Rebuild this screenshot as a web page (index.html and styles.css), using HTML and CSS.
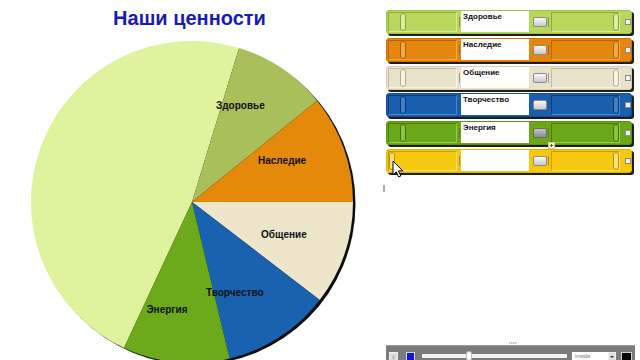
FILE: index.html
```html
<!DOCTYPE html>
<html lang="ru">
<head>
<meta charset="utf-8">
<title>Наши ценности</title>
<link rel="stylesheet" href="styles.css">
</head>
<body>
<div class="page">
  <section class="chart">
    <h1 class="title">Наши ценности</h1>
    <svg class="pie" width="384" height="324" viewBox="0 36 384 324" xmlns="http://www.w3.org/2000/svg">
      <defs>
        <filter id="sh" x="-10%" y="-10%" width="120%" height="120%">
          <feGaussianBlur stdDeviation="0.7"/>
        </filter>
      </defs>
      <circle cx="194.5" cy="204" r="161" fill="#111" filter="url(#sh)"/>
      <path d="M192 202 L124 347.9 A161 161 0 0 1 239.1 48 Z" fill="#dff29d"/>
      <path d="M192 202 L239.1 48 A161 161 0 0 1 317.1 100.7 Z" fill="#a9bf5a"/>
      <path d="M192 202 L317.1 100.7 A161 161 0 0 1 353 202 Z" fill="#e5890b"/>
      <path d="M192 202 L353 202 A161 161 0 0 1 319.7 300 Z" fill="#ede6cb"/>
      <path d="M192 202 L319.7 300 A161 161 0 0 1 229.6 358.6 Z" fill="#1862b0"/>
      <path d="M192 202 L229.6 358.6 A161 161 0 0 1 124 347.9 Z" fill="#6ca91b"/>
      <g class="labels">
        <text x="216" y="108.5">Здоровье</text>
        <text x="258" y="163.5">Наследие</text>
        <text x="261" y="237.5">Общение</text>
        <text x="206" y="295.5">Творчество</text>
        <text x="146.5" y="312.8">Энергия</text>
      </g>
    </svg>
  </section>

  <aside class="panel">
    <div class="rows">
      <div class="row row-lime">
        <div class="track"><span class="thumb" style="margin-left:11px"></span></div>
        <span class="tick"></span>
        <div class="field">Здоровье</div>
        <span class="btn"></span>
        <span class="tick"></span>
        <div class="track track-r"><span class="thumb" style="margin-left:61px"></span></div>
        <span class="check"></span>
      </div>
      <div class="row row-orange">
        <div class="track"><span class="thumb" style="margin-left:11px"></span></div>
        <span class="tick"></span>
        <div class="field">Наследие</div>
        <span class="btn"></span>
        <span class="tick"></span>
        <div class="track track-r"><span class="thumb" style="margin-left:61px"></span></div>
        <span class="check"></span>
      </div>
      <div class="row row-cream">
        <div class="track"><span class="thumb" style="margin-left:11px"></span></div>
        <span class="tick"></span>
        <div class="field">Общение</div>
        <span class="btn"></span>
        <span class="tick"></span>
        <div class="track track-r"><span class="thumb" style="margin-left:61px"></span></div>
        <span class="check"></span>
      </div>
      <div class="row row-blue">
        <div class="track"><span class="thumb" style="margin-left:11px"></span></div>
        <span class="tick"></span>
        <div class="field">Творчество</div>
        <span class="btn"></span>
        <span class="tick"></span>
        <div class="track track-r"><span class="thumb" style="margin-left:61px"></span></div>
        <span class="check"></span>
      </div>
      <div class="row row-green">
        <div class="track"><span class="thumb" style="margin-left:11px"></span></div>
        <span class="tick"></span>
        <div class="field">Энергия</div>
        <span class="btn btn-active"></span>
        <span class="tick"></span>
        <div class="track track-r"><span class="thumb" style="margin-left:61px"></span></div>
        <span class="check"></span>
      </div>
      <div class="row row-yellow">
        <div class="track"><span class="thumb" style="margin-left:0px"></span></div>
        <span class="tick"></span>
        <div class="field"></div>
        <span class="btn"></span>
        <span class="tick"></span>
        <div class="track track-r"><span class="thumb" style="margin-left:61px"></span></div>
        <span class="check"></span>
      </div>
    </div>
    <span class="mark"></span>
    <div class="spacer"></div>
    <span class="grip"></span>
    <div class="toolbar">
      <span class="tb-btn">i</span>
      <span class="tb-color"></span>
      <div class="tb-slider"><span class="tb-thumb"></span></div>
      <span class="tb-select">inside</span>
      <span class="tb-arrow"></span>
      <span class="tb-black"></span>
    </div>
  </aside>

  <span class="tip"></span>
  <svg class="cursor" width="12" height="19" viewBox="0 0 12 19" xmlns="http://www.w3.org/2000/svg">
    <path d="M1 1 L1 15 L4.3 11.8 L6.6 17 L8.8 16 L6.5 10.9 L10.8 10.9 Z" fill="#fff" stroke="#000" stroke-width="1" stroke-linejoin="round"/>
  </svg>
</div>
</body>
</html>
```

FILE: styles.css
```css
html, body {
  margin: 0;
  padding: 0;
}

body {
  width: 640px;
  height: 360px;
  overflow: hidden;
  background: #ffffff;
  font-family: "Liberation Sans", Arial, sans-serif;
}

.page {
  position: relative;
  display: flex;
  width: 640px;
  height: 360px;
}

/* ---------- chart ---------- */
.chart {
  width: 384px;
  flex: none;
  display: flex;
  flex-direction: column;
}

.title {
  margin: 0;
  height: 36px;
  box-sizing: border-box;
  padding: 6px 5px 0 0;
  font-size: 20px;
  line-height: 24px;
  font-weight: bold;
  color: #1a1ab6;
  text-align: center;
}

.pie {
  display: block;
}

.labels text {
  font-family: "Liberation Sans", Arial, sans-serif;
  font-size: 10px;
  font-weight: bold;
  fill: #111;
}

/* ---------- panel ---------- */
.panel {
  width: 256px;
  flex: none;
  display: flex;
  flex-direction: column;
  box-sizing: border-box;
  padding: 10px 0 0 2px;
}

.rows {
  display: flex;
  flex-direction: column;
  gap: 3.8px;
}

.row {
  width: 246px;
  height: 24px;
  box-sizing: border-box;
  display: flex;
  align-items: center;
  background: var(--bg);
  border: 1px solid var(--bd);
  border-radius: 3px;
  box-shadow: 2px 2px 0 #1e1e1e;
}

.row-lime   { --bg: #b9d75c; --bd: #a3c046; --lo: #8fa93c; --hi: #d6ea98; --tk: #dcefa0; --tkb: #86a236; }
.row-orange { --bg: #e5860d; --bd: #cd7200; --lo: #b86200; --hi: #f3ac55; --tk: #f4a747; --tkb: #b15e00; }
.row-cream  { --bg: #e9e3cc; --bd: #d6cfb3; --lo: #c4bc9c; --hi: #f7f3e6; --tk: #f7f4e6; --tkb: #b5ad8c; }
.row-blue   { --bg: #1a5eae; --bd: #104c94; --lo: #0c3d7a; --hi: #4a86cc; --tk: #3f80c8; --tkb: #0b3670; }
.row-green  { --bg: #6ba819; --bd: #5a940b; --lo: #4a7f04; --hi: #94c94e; --tk: #8cc441; --tkb: #3e7200; }
.row-yellow { --bg: #f6c80f; --bd: #e2b300; --lo: #c89d00; --hi: #fde27a; --tk: #fbe277; --tkb: #bb9000; }

.track {
  width: 69px;
  height: 20px;
  box-sizing: border-box;
  margin-left: 1px;
  display: flex;
  align-items: center;
  border: 1px solid;
  border-color: var(--lo) var(--hi) var(--hi) var(--lo);
}

.track-r {
  margin-left: 2px;
}

.thumb {
  width: 6px;
  height: 18px;
  box-sizing: border-box;
  flex: none;
  border-radius: 3px;
  background: var(--tk);
  border: 1px solid var(--tkb);
}

.tick {
  width: 1px;
  height: 10px;
  margin-left: 2px;
  background: rgba(70, 70, 70, 0.45);
}

.btn + .tick {
  margin-left: 1px;
}

.field {
  width: 68px;
  height: 21px;
  box-sizing: border-box;
  margin: 0 0 1px 1px;
  align-self: flex-start;
  background: #ffffff;
  padding: 1px 0 0 2px;
  font-size: 8px;
  line-height: 10px;
  font-weight: bold;
  color: #111;
  white-space: nowrap;
  overflow: hidden;
}

.btn {
  width: 14px;
  height: 10px;
  box-sizing: border-box;
  margin-left: 4px;
  border: 1px solid #8a8a8a;
  border-radius: 2px;
  background: linear-gradient(#fafafa, #c9c9c9);
}

.btn-active {
  background: linear-gradient(#c4c4c4, #8c8c8c);
  border-color: #6a6a6a;
}

.check {
  width: 6px;
  height: 6px;
  box-sizing: border-box;
  margin-left: 5px;
  border: 1px solid #8c8c8c;
  background: #f2f2f2;
}

.mark {
  width: 2px;
  height: 7px;
  margin: 12px 0 0 -3px;
  background: #a8a8a8;
}

.spacer {
  flex: 1;
}

.grip {
  width: 8px;
  height: 2px;
  margin: 0 0 1px 123px;
  background: repeating-linear-gradient(90deg, #c4c4c4 0 1px, #e4e4e4 1px 2px);
}

/* ---------- toolbar ---------- */
.toolbar {
  width: 249px;
  height: 15px;
  flex: none;
  box-sizing: border-box;
  padding-top: 6px;
  display: flex;
  align-items: flex-start;
  overflow: hidden;
  background: #7b7b7b;
  border-top: 1px solid #9a9a9a;
}

.tb-btn {
  width: 9px;
  height: 10px;
  box-sizing: border-box;
  margin-left: 3px;
  background: #dcdcdc;
  border: 1px solid #efefef;
  font-size: 6px;
  line-height: 8px;
  color: #555;
  text-align: center;
}

.tb-color {
  width: 9px;
  height: 10px;
  box-sizing: border-box;
  margin-left: 8px;
  background: #1212e4;
  border: 1px solid #d8d8d8;
}

.tb-slider {
  width: 145px;
  height: 4px;
  margin: 2px 0 0 7px;
  display: flex;
  align-items: center;
  background: #f2f2f2;
  border-radius: 1px;
}

.tb-thumb {
  width: 4px;
  height: 8px;
  margin-left: 45px;
  border-radius: 2px;
  background: #ffffff;
  box-shadow: 0 0 0 1px #bdbdbd;
}

.tb-select {
  width: 36px;
  height: 10px;
  box-sizing: border-box;
  margin-left: 5px;
  padding-left: 3px;
  background: #ffffff;
  font-size: 6px;
  line-height: 8px;
  color: #777;
}

.tb-arrow {
  width: 8px;
  height: 10px;
  box-sizing: border-box;
  background: #dedede;
  border: 1px solid #f0f0f0;
  position: relative;
}

.tb-arrow::after {
  content: "";
  position: absolute;
  left: 1px;
  top: 3px;
  border-left: 2px solid transparent;
  border-right: 2px solid transparent;
  border-top: 2px solid #333;
}

.tb-black {
  width: 11px;
  height: 10px;
  box-sizing: border-box;
  margin-left: 5px;
  background: #000;
  border: 1px solid #d0d0d0;
}

/* ---------- overlays ---------- */
.tip {
  position: absolute;
  left: 548px;
  top: 142px;
  width: 7px;
  height: 7px;
  box-sizing: border-box;
  background: #fffbd4 radial-gradient(circle, #555 0 1px, transparent 1.2px);
  border: 1px solid #cfcfb0;
}

.cursor {
  position: absolute;
  left: 392px;
  top: 160px;
}
```
